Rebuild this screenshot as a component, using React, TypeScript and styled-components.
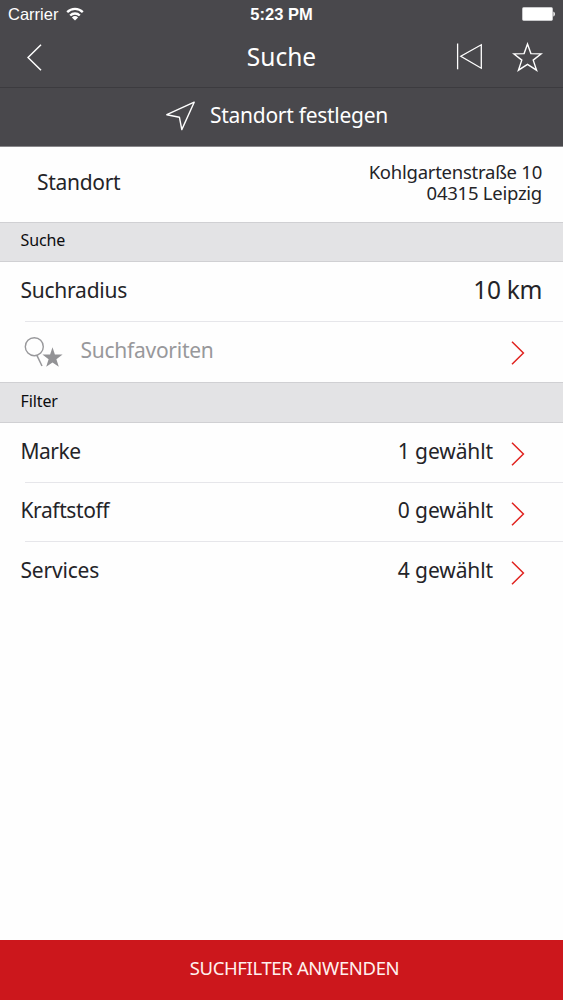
import React from "react";
import styled, { createGlobalStyle } from "styled-components";

const GlobalStyle = createGlobalStyle`
  *, *::before, *::after { box-sizing: border-box; }
  body {
    margin: 0;
    background: #fefefe;
    font-family: "Noto Sans", "Open Sans", sans-serif;
    color: #242428;
  }
  button { font: inherit; color: inherit; background: none; border: 0; padding: 0; margin: 0; }
  svg { display: block; flex: none; }
`;

const Screen = styled.div`
  display: flex;
  flex-direction: column;
  width: 100%;
  height: 100vh;
  overflow: hidden;
`;

const Header = styled.header`
  background: #49484c;
  color: #fff;
  flex: none;
  border-bottom: 1px solid #88878a;
`;

const StatusBar = styled.div`
  display: grid;
  grid-template-columns: 1fr auto 1fr;
  align-items: center;
  height: 29px;
  padding: 0 8px;
  font: 16.5px/29px "Liberation Sans", Arial, sans-serif;
`;

const Carrier = styled.div`
  display: flex;
  align-items: center;
  gap: 8px;

  svg { margin-bottom: 2px; }
`;

const Clock = styled.div`
  font-weight: bold;
`;

const BatterySlot = styled.div`
  display: flex;
  justify-content: flex-end;
  padding-bottom: 1px;
`;

const NavBar = styled.div`
  display: grid;
  grid-template-columns: 1fr auto 1fr;
  align-items: center;
  height: 59px;
  padding: 0 20px 3px 27px;
  border-bottom: 1px solid #3c3b3f;
`;

const NavButton = styled.button`
  display: flex;
  justify-self: start;
  padding-top: 1px;
`;

const ResetButton = styled(NavButton)`
  padding: 0 0 1px;
`;

const Title = styled.h1`
  margin: 1px 0 0 -7px;
  font-size: 24.5px;
  font-weight: 400;
  line-height: 34px;
`;

const NavActions = styled.div`
  display: flex;
  justify-content: flex-end;
  align-items: center;
  gap: 29px;
`;

const LocateButton = styled.button`
  display: flex;
  align-items: center;
  justify-content: center;
  gap: 14px;
  width: 100%;
  height: 58px;
  padding: 0 10px 2px 0;
`;

const LocateLabel = styled.span`
  font-size: 21px;
  line-height: 30px;
  letter-spacing: -0.28px;
  margin-bottom: 3px;
`;

const LocationRow = styled.div`
  display: flex;
  align-items: center;
  justify-content: space-between;
  flex: none;
  height: 75px;
  padding: 0 21px 4px 37px;
`;

const Address = styled.address`
  display: flex;
  flex-direction: column;
  align-items: flex-end;
  font-style: normal;
  font-size: 18.5px;
  line-height: 21px;
  letter-spacing: -0.25px;
  margin-bottom: 2px;
`;

const SectionHeader = styled.h2<{ $height?: number }>`
  flex: none;
  margin: 0;
  height: ${(p) => p.$height ?? 40}px;
  padding-left: 20.5px;
  background: #e3e3e5;
  border: solid #d0d0d3;
  border-width: 1px 0;
  color: #0c0c0e;
  font-size: 16px;
  font-weight: 400;
  line-height: ${(p) => (p.$height ?? 40) - 5}px;
  letter-spacing: -0.1px;
`;

const Row = styled.div<{ $height?: number; $divider?: boolean }>`
  display: flex;
  align-items: center;
  flex: none;
  height: ${(p) => p.$height ?? 60}px;
  padding: 0 21px 0 20.5px;
  background: ${(p) =>
    p.$divider
      ? "linear-gradient(#e6e6ea, #e6e6ea) 25px 100% / 100% 1px no-repeat"
      : "none"};
`;

const Label = styled.span<{ $muted?: boolean; $tracking?: number }>`
  flex: 1;
  font-size: 21px;
  line-height: 30px;
  letter-spacing: ${(p) => p.$tracking ?? -0.24}px;
  color: ${(p) => (p.$muted ? "#98989b" : "inherit")};
  padding-bottom: 5px;
`;

const PlaceLabel = styled(Label)`
  padding-bottom: 1px;
`;

const Radius = styled.span`
  font-size: 24.5px;
  line-height: 34px;
  letter-spacing: -0.35px;
  padding-bottom: 4px;
`;

const Count = styled.span`
  font-size: 21px;
  line-height: 30px;
  letter-spacing: -0.1px;
  padding-bottom: 5px;
`;

const Disclosure = styled.span`
  display: flex;
  margin: 2px 17px 0 18px;
`;

const FavouriteIcon = styled.span`
  display: flex;
  margin: 0 16.5px 0 3.5px;
`;

const Spacer = styled.div`
  flex: 1;
`;

const ApplyButton = styled.button`
  flex: none;
  height: 60px;
  padding: 0 0 4px 26px;
  background: #cc171c;
  color: #fff0ee;
  font-size: 18.5px;
  line-height: 26px;
  letter-spacing: -0.36px;
  text-align: center;
`;

const Wifi = () => (
  <svg width="18" height="14" viewBox="0 0 18 14" fill="none" stroke="#fff" strokeWidth="2.3">
    <path d="M1.2 5.1A11 11 0 0 1 16.8 5.1" />
    <path d="M4.2 8.5A6.8 6.8 0 0 1 13.8 8.5" />
    <path d="M9 13.4L5.9 10.5A4.5 4.5 0 0 1 12.1 10.5Z" fill="#fff" stroke="none" />
  </svg>
);

const Battery = () => (
  <svg width="33" height="14" viewBox="0 0 33 14">
    <rect x="0.5" y="0.5" width="30" height="13" rx="1.2" fill="#fff" stroke="#c9c9cb" />
    <path d="M31.4 4.4C33.4 5.2 33.4 8.8 31.4 9.6Z" fill="#fff" />
  </svg>
);

const Back = () => (
  <svg width="15" height="27" viewBox="0 0 15 27" fill="none" stroke="#fff" strokeWidth="1.5">
    <path d="M14 0.8L1 13.5L14 26.2" />
  </svg>
);

const Reset = () => (
  <svg width="27" height="27" viewBox="0 0 27 27" fill="none" stroke="#fff" strokeWidth="1.3">
    <path d="M1.6 0.5V26.3" />
    <path d="M25.3 1.8V25.2L4.8 13.3Z" />
  </svg>
);

const Star = () => (
  <svg width="31" height="30" viewBox="0 0 31 30" fill="none" stroke="#fff" strokeWidth="1.4">
    <path d="M15.5 2L18.9 11.6L29.3 11.8L21.2 18.1L24.6 28.2L15.5 22.3L6.4 28.2L9.8 18.1L1.7 11.8L12.1 11.6Z" />
  </svg>
);

const LocationArrow = () => (
  <svg width="31" height="30" viewBox="0 0 31 30" fill="none" stroke="#fff" strokeWidth="1.4">
    <path d="M29.2 1.2L1.8 13.7L14.4 16.2L16.8 28.6Z" strokeLinejoin="round" />
  </svg>
);

const Chevron = () => (
  <svg width="14" height="24" viewBox="0 0 14 24" fill="none" stroke="#e0231f" strokeWidth="1.5">
    <path d="M1 0.8L12.4 12L1 23.2" />
  </svg>
);

const SearchFavourite = () => (
  <svg width="40" height="31" viewBox="0 0 40 31" fill="none">
    <circle cx="10.3" cy="9.7" r="9" stroke="#98989b" strokeWidth="1.4" />
    <path d="M12.9 18.4L18 29" stroke="#98989b" strokeWidth="1.5" />
    <path
      d="M28.5 10.3L30.9 17.4L38.6 17.6L32.4 22.2L34.8 29.7L28.5 25.4L22.2 29.7L24.6 22.2L18.4 17.6L26.1 17.4Z"
      fill="#929295"
    />
  </svg>
);

const filters = [
  { name: "Marke", count: 1, height: 60, tracking: -0.5 },
  { name: "Kraftstoff", count: 0, height: 59, tracking: -0.4 },
  { name: "Services", count: 4, height: 60, tracking: -0.2 },
];

export default function App() {
  return (
    <Screen>
      <GlobalStyle />
      <Header>
        <StatusBar>
          <Carrier>
            Carrier
            <Wifi />
          </Carrier>
          <Clock>5:23 PM</Clock>
          <BatterySlot>
            <Battery />
          </BatterySlot>
        </StatusBar>
        <NavBar>
          <NavButton aria-label="Zurück">
            <Back />
          </NavButton>
          <Title>Suche</Title>
          <NavActions>
            <ResetButton aria-label="Zurücksetzen">
              <Reset />
            </ResetButton>
            <NavButton aria-label="Favorit">
              <Star />
            </NavButton>
          </NavActions>
        </NavBar>
        <LocateButton>
          <LocationArrow />
          <LocateLabel>Standort festlegen</LocateLabel>
        </LocateButton>
      </Header>

      <LocationRow>
        <PlaceLabel $tracking={-0.3}>Standort</PlaceLabel>
        <Address>
          <span>Kohlgartenstraße 10</span>
          <span>04315 Leipzig</span>
        </Address>
      </LocationRow>

      <SectionHeader>Suche</SectionHeader>
      <Row $divider>
        <Label>Suchradius</Label>
        <Radius>10 km</Radius>
      </Row>
      <Row>
        <FavouriteIcon>
          <SearchFavourite />
        </FavouriteIcon>
        <Label $muted $tracking={-0.26}>
          Suchfavoriten
        </Label>
        <Disclosure>
          <Chevron />
        </Disclosure>
      </Row>

      <SectionHeader $height={41}>Filter</SectionHeader>
      {filters.map((f, i) => (
        <Row key={f.name} $height={f.height} $divider={i < filters.length - 1}>
          <Label $tracking={f.tracking}>{f.name}</Label>
          <Count>{f.count} gewählt</Count>
          <Disclosure>
            <Chevron />
          </Disclosure>
        </Row>
      ))}

      <Spacer />
      <ApplyButton>SUCHFILTER ANWENDEN</ApplyButton>
    </Screen>
  );
}
